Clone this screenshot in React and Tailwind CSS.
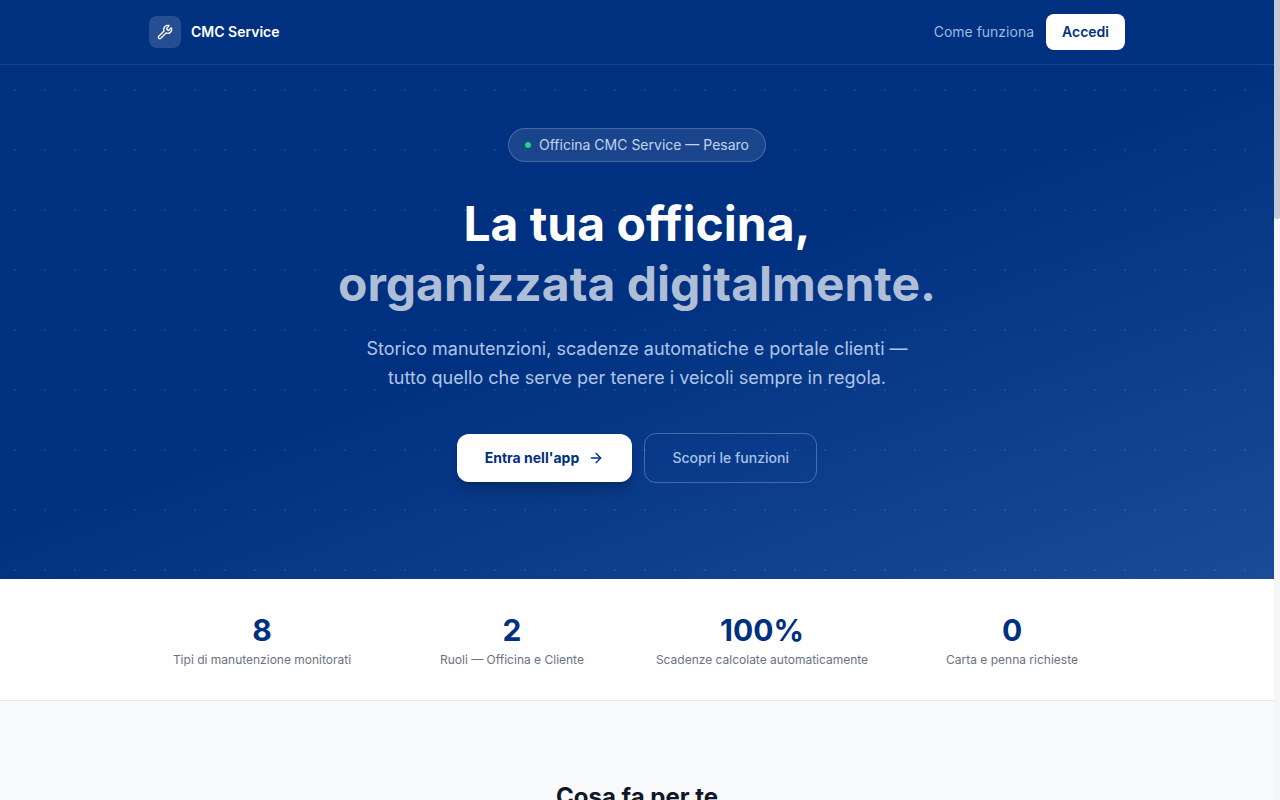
import React from "react";
import { ArrowRight, Wrench } from "lucide-react";

const stats = [
  ["8", "Tipi di manutenzione monitorati"],
  ["2", "Ruoli — Officina e Cliente"],
  ["100%", "Scadenze calcolate automaticamente"],
  ["0", "Carta e penna richieste"],
];

export default function App() {
  return (
    <div className="flex h-screen overflow-hidden bg-white font-['Inter',sans-serif]">
      <main className="min-w-0 flex-1">
        <div className="bg-[linear-gradient(160deg,#003080_0%,#003080_50%,#1a4a9a_100%)]">
          <header className="border-b border-white/10">
            <div className="mx-auto flex h-16 max-w-5xl items-center justify-between px-6">
              <div className="flex items-center gap-2.5">
                <div className="flex h-8 w-8 items-center justify-center rounded-lg bg-white/15">
                  <Wrench className="h-4 w-4 text-white" strokeWidth={2} />
                </div>
                <span className="text-sm font-semibold text-white">CMC Service</span>
              </div>
              <nav className="flex items-center gap-3">
                <span className="text-sm text-[#9dbae2]">Come funziona</span>
                <span className="flex h-9 items-center rounded-lg bg-white px-4 text-sm font-semibold text-[#003080]">Accedi</span>
              </nav>
            </div>
          </header>
          <section className="flex h-[514px] flex-col items-center bg-[radial-gradient(circle,rgba(255,255,255,0.08)_1px,transparent_1px)] bg-[length:30px_60px] bg-[position:0_-5px] pt-[63px]">
            <div className="flex h-[34px] items-center gap-2 rounded-full border border-white/20 bg-white/10 px-4 text-sm text-[#c3d3ec]">
              <span className="h-1.5 w-1.5 rounded-full bg-[#22d47a]" />
              Officina CMC Service — Pesaro
            </div>
            <h1 className="mt-[32px] text-center text-5xl leading-[60px] font-bold text-white">
              La tua officina,
              <br />
              <span className="text-white/70">organizzata digitalmente.</span>
            </h1>
            <p className="mt-[20px] text-center text-lg leading-[29px] text-[#b0c6e6]">
              Storico manutenzioni, scadenze automatiche e portale clienti —
              <br />
              tutto quello che serve per tenere i veicoli sempre in regola.
            </p>
            <div className="mt-[41px] flex items-center gap-3">
              <span className="flex h-12 items-center gap-[9px] rounded-xl bg-white px-7 text-sm font-bold text-[#003080] shadow-lg shadow-black/20">
                Entra nell'app
                <ArrowRight className="h-4 w-4" />
              </span>
              <span className="flex h-[50px] w-[173px] items-center justify-center rounded-xl border border-white/25 text-sm font-medium text-[#a9c3e8]">
                Scopri le funzioni
              </span>
            </div>
          </section>
        </div>
        <section className="border-b border-gray-200 bg-white">
          <div className="mx-auto grid h-[121px] max-w-5xl grid-cols-4 gap-6 px-6 pt-[33px]">
            {stats.map(([value, label]) => (
              <div key={label} className="text-center">
                <div className="text-3xl leading-9 font-bold text-[#003080]">{value}</div>
                <div className="mt-1 text-xs text-gray-500">{label}</div>
              </div>
            ))}
          </div>
        </section>
        <section className="h-[2220px] bg-gray-50 py-20">
          <h2 className="text-center text-2xl font-bold text-gray-900">Cosa fa per te</h2>
        </section>
      </main>
      <aside className="h-screen w-1.5 shrink-0 bg-[#f4f6f9]">
        <div className="h-[219px] rounded-b-[3px] bg-[#c5c9d3]" />
      </aside>
    </div>
  );
}
